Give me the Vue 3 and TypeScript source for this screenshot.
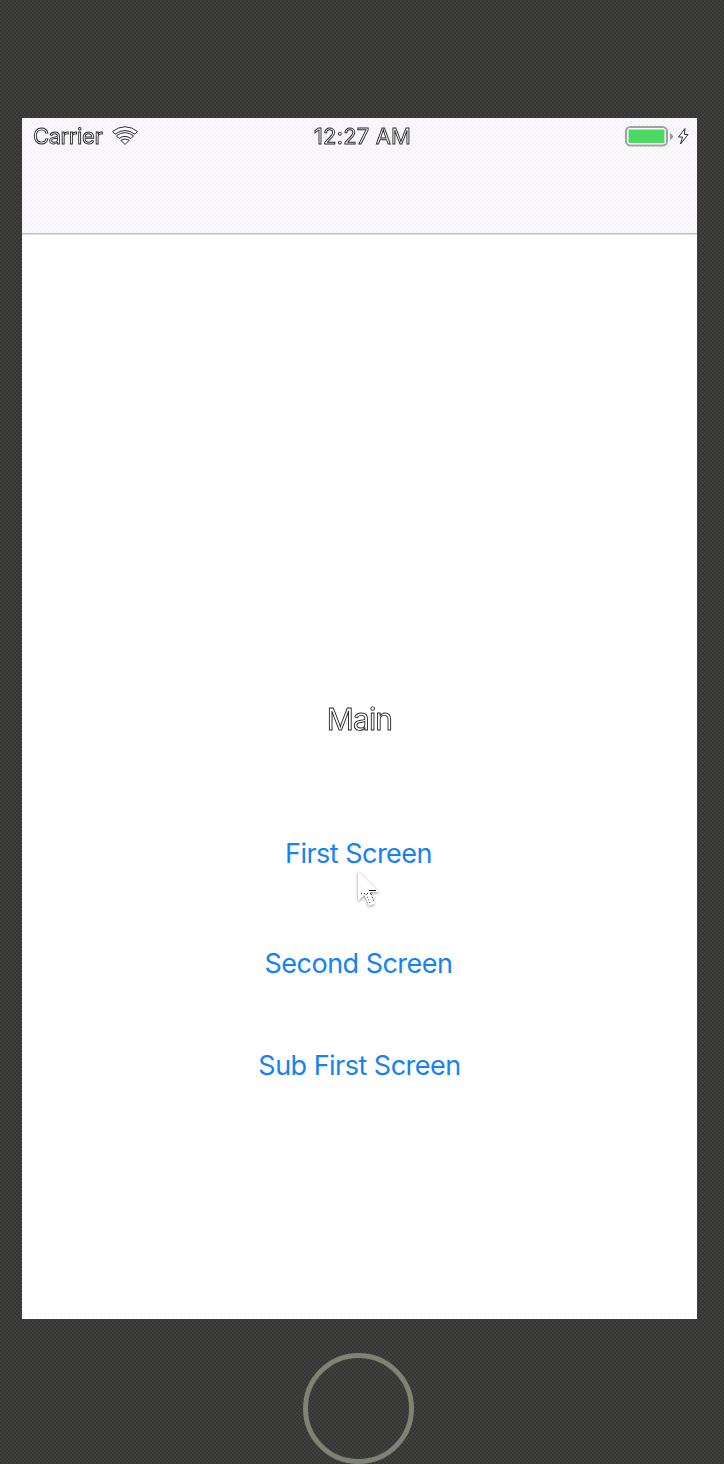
<script setup lang="ts">
interface Link {
  id: string
  label: string
}
const links: Link[] = [
  { id: 'first', label: 'First Screen' },
  { id: 'second', label: 'Second Screen' },
  { id: 'sub', label: 'Sub First Screen' },
]
</script>

<template>
  <div class="device">
    <main class="screen">
      <header class="navbar">
        <div class="status">
          <div class="left">
            <span class="carrier outlined">Carrier</span>
            <svg class="wifi" width="28" height="20" viewBox="0 0 28 20" fill="#fff" stroke="#2c2e2c" stroke-width="1">
              <path d="M1.500 5.500Q14-4 26.500 5.500L24 8.200Q14 .8 4 8.200Z" />
              <path d="M5.500 9.800Q14 3.500 22.500 9.800L20 12.500Q14 8.200 8 12.500Z" />
              <path d="M9.800 14.300Q14 11.500 18.200 14.300L14 18.500Z" />
            </svg>
          </div>
          <span class="time outlined">12:27 AM</span>
          <div class="right">
            <svg width="65" height="24" viewBox="0 0 65 24">
              <rect x="1" y="2" width="41" height="18.500" rx="4.500" fill="#fff" stroke="#a0a39f" stroke-width="2" />
              <rect x="3.500" y="4.500" width="36" height="13.500" rx="1" fill="#4cd964" />
              <path d="M45 8Q51 11.500 45 15Z" fill="#92968f" />
              <path d="M60 3.500L53.500 12H57.500L55.500 19L63 9.500H59.300Z" fill="#fff" stroke="#2c2e2c" stroke-width="1" />
            </svg>
          </div>
        </div>
      </header>
      <section class="content">
        <h1 class="title outlined">Main</h1>
        <nav class="links">
          <a v-for="link in links" :key="link.id" :class="['link', link.id]">{{ link.label }}</a>
        </nav>
        <svg class="cursor" width="34" height="46" viewBox="0 0 34 46">
          <path d="M6 5V35L12.500 29L17 40L22.500 37.500L18 26H27Z" fill="#fff" />
          <path d="M17 24.500H24" stroke="#111" />
          <path d="M9 27.500H19M14 28L18 37M19 28L22 36" fill="none" stroke="#333" stroke-dasharray="1 2" />
        </svg>
      </section>
    </main>
    <div class="home"></div>
  </div>
</template>

<style scoped>
.device {
  box-sizing: border-box;
  width: 724px;
  height: 1464px;
  padding: 118px 27px 0 22px;
  overflow: hidden;
  background: repeating-conic-gradient(#333433 0 25%, #414240 0 50%) 0 0 / 4px 4px;
  font-family: Inter, "Liberation Sans", sans-serif;
}
.screen {
  position: relative;
  height: 1201px;
  background: #fff;
}
.navbar {
  box-sizing: border-box;
  height: 117px;
  border-bottom: 1px solid #e2e4e2;
  box-shadow: inset 0 -1px #bcbfbc;
  background: repeating-conic-gradient(#f5f3f7 0 25%, #fcfafc 0 50%) 0 0 / 4px 4px;
}
.status {
  display: grid;
  grid-template-columns: 1fr auto 1fr;
  height: 37px;
  align-items: center;
  padding: 0 7px 0 11px;
}
.left {
  display: flex;
  align-items: center;
  gap: 9px;
}
.wifi {
  margin-top: -2px;
}
.right {
  display: flex;
  justify-content: flex-end;
}
.outlined {
  color: #fff;
  font-weight: 400;
  -webkit-text-stroke: 0.9px #242624;
  will-change: transform;
}
.carrier,
.time {
  font-size: 22px;
  line-height: 26px;
  margin-top: -1px;
  white-space: nowrap;
}
.carrier {
  letter-spacing: -0.4px;
}
.time {
  margin-left: 2px;
  letter-spacing: 0.15px;
}
.content {
  text-align: center;
}
.title {
  margin: 466px 0 0;
  font-size: 30px;
  line-height: 36px;
  letter-spacing: -0.9px;
}
.links {
  display: flex;
  flex-direction: column;
  align-items: center;
}
.link {
  color: #1482f5;
  font-size: 27px;
  line-height: 34px;
  letter-spacing: -0.52px;
  white-space: nowrap;
}
.first {
  margin-top: 100px;
  margin-right: 2px;
}
.second {
  margin-top: 76px;
  margin-right: 2px;
}
.sub {
  margin-top: 68px;
}
.cursor {
  position: absolute;
  left: 330px;
  top: 748px;
  filter: drop-shadow(0 1px 1.500px rgba(0, 0, 0, 0.45));
}
.home {
  box-sizing: border-box;
  width: 111px;
  height: 111px;
  margin: 34px 0 0 281px;
  border: 5px solid #7e8373;
  border-radius: 50%;
}
</style>
